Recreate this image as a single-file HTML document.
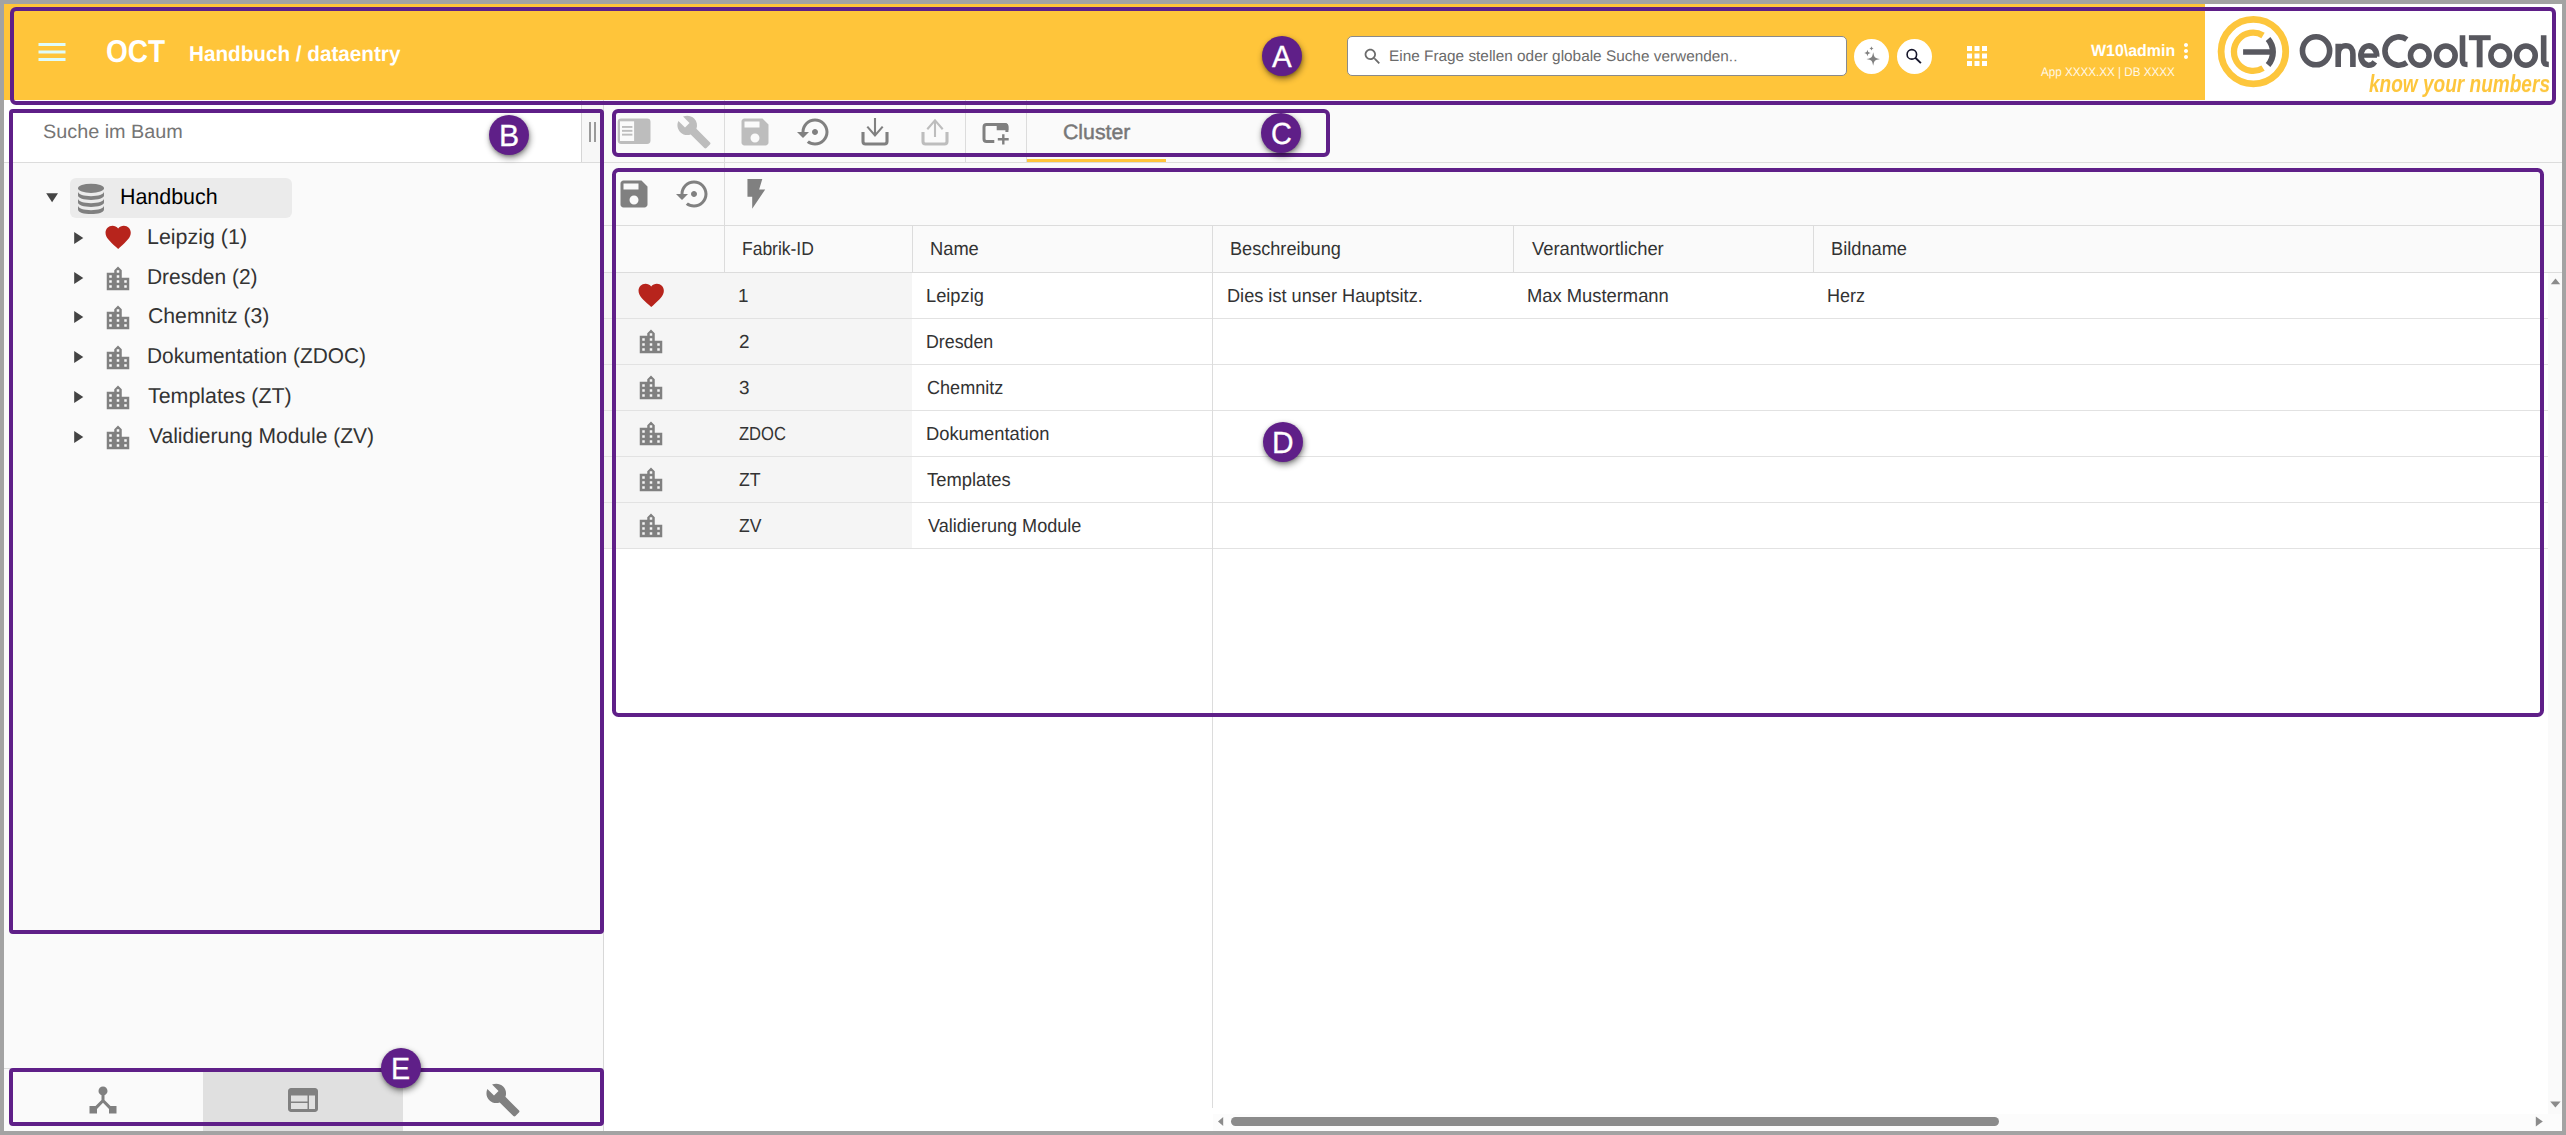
<!DOCTYPE html>
<html lang="de"><head><meta charset="utf-8"><title>OCT - Handbuch / dataentry</title>
<style>
html,body{margin:0;padding:0}
body{width:2566px;height:1135px;position:relative;overflow:hidden;background:#a3a3a3;font-family:"Liberation Sans",sans-serif;}
.r{position:absolute}
.i{position:absolute;display:block;overflow:visible}
.t{position:absolute;white-space:nowrap;transform-origin:0 50%;display:block}
.bx{position:absolute;box-sizing:border-box;border:4px solid #5f1f88}
.bd{position:absolute;width:40px;height:40px;border-radius:50%;background:#5f1f88;box-shadow:1px 3px 6px rgba(0,0,0,.45),0 1px 3px rgba(0,0,0,.2)}
</style></head><body>
<div class="r" style="left:4px;top:4px;width:2558px;height:1127px;background:#ffffff;"></div>
<div class="r" style="left:4px;top:4px;width:2201px;height:96px;background:#ffc53a;"></div>
<div class="r" style="left:4px;top:163px;width:600px;height:905px;background:#fafafa;"></div>
<div class="r" style="left:4px;top:100px;width:577px;height:62px;background:#ffffff;"></div>
<div class="r" style="left:581px;top:100px;width:23px;height:62px;background:#f7f7f7;border-left:1px solid #d6d6d6;box-sizing:border-box;"></div>
<div class="r" style="left:4px;top:162px;width:600px;height:1px;background:#dcdcdc;"></div>
<div class="r" style="left:4px;top:1068px;width:600px;height:63px;background:#fafafa;border-top:1px solid #dcdcdc;box-sizing:border-box;"></div>
<div class="r" style="left:203px;top:1069px;width:200px;height:62px;background:#e0e0e0;"></div>
<div class="r" style="left:603px;top:100px;width:1px;height:1031px;background:#d8d8d8;"></div>
<div class="r" style="left:604px;top:100px;width:1958px;height:125px;background:#fafafa;"></div>
<div class="r" style="left:604px;top:162px;width:1958px;height:1px;background:#dcdcdc;"></div>
<div class="r" style="left:604px;top:225px;width:1958px;height:1px;background:#dcdcdc;"></div>
<div class="r" style="left:604px;top:226px;width:1958px;height:46px;background:#fafafa;"></div>
<div class="r" style="left:604px;top:272px;width:1958px;height:1px;background:#dcdcdc;"></div>
<div class="r" style="left:604px;top:273px;width:308px;height:276px;background:#f5f5f5;"></div>
<div class="r" style="left:604px;top:318px;width:1944px;height:1px;background:#e2e2e2;"></div>
<div class="r" style="left:604px;top:364px;width:1944px;height:1px;background:#e2e2e2;"></div>
<div class="r" style="left:604px;top:410px;width:1944px;height:1px;background:#e2e2e2;"></div>
<div class="r" style="left:604px;top:456px;width:1944px;height:1px;background:#e2e2e2;"></div>
<div class="r" style="left:604px;top:502px;width:1944px;height:1px;background:#e2e2e2;"></div>
<div class="r" style="left:604px;top:548px;width:1944px;height:1px;background:#e2e2e2;"></div>
<div class="r" style="left:724px;top:226px;width:1px;height:46px;background:#dcdcdc;"></div>
<div class="r" style="left:912px;top:226px;width:1px;height:46px;background:#dcdcdc;"></div>
<div class="r" style="left:1513px;top:226px;width:1px;height:46px;background:#dcdcdc;"></div>
<div class="r" style="left:1813px;top:226px;width:1px;height:46px;background:#dcdcdc;"></div>
<div class="r" style="left:724px;top:100px;width:1px;height:126px;background:#dcdcdc;"></div>
<div class="r" style="left:965px;top:100px;width:1px;height:62px;background:#dcdcdc;"></div>
<div class="r" style="left:1026px;top:100px;width:1px;height:62px;background:#dcdcdc;"></div>
<div class="r" style="left:1212px;top:226px;width:1px;height:882px;background:#dcdcdc;"></div>
<div class="r" style="left:1027px;top:159px;width:139px;height:3px;background:#ffc53a;"></div>
<div class="r" style="left:2548px;top:273px;width:14px;height:841px;background:#fafafa;"></div>
<div class="r" style="left:1213px;top:1114px;width:1349px;height:17px;background:#fcfcfc;"></div>
<div class="r" style="left:1231px;top:1117px;width:768px;height:9px;background:#8b8b8b;border-radius:4.5px;"></div>
<svg class="i" style="left:2548px;top:273px" width="14" height="20" viewBox="0 0 14 20"><path fill="#8b8b8b" d="M2.8 11.2 L7.5 5.6 L12.2 11.2z"/></svg>
<svg class="i" style="left:2548px;top:1094px" width="14" height="20" viewBox="0 0 14 20"><path fill="#8b8b8b" d="M2.2 7.6 L12.6 7.6 L7.4 13.5z"/></svg>
<svg class="i" style="left:1213px;top:1114px" width="18" height="17" viewBox="0 0 18 17"><path fill="#8b8b8b" d="M5 7.5 L10.2 3 L10.2 12z"/></svg>
<svg class="i" style="left:2530px;top:1114px" width="18" height="17" viewBox="0 0 18 17"><path fill="#8b8b8b" d="M12.8 7.5 L5.8 2.6 L5.8 12.4z"/></svg>
<svg class="i" style="left:34.00px;top:34.00px" width="36" height="36" viewBox="0 0 24 24" ><path fill="#dffdfb" d="M3 18h18v-2H3v2zm0-5h18v-2H3v2zm0-7v2h18V6H3z"/></svg>
<span class="t" style="left:105.85px;top:30.90px;font-size:31.69px;line-height:41px;color:#fff;font-weight:700;transform:rotate(0.03deg) scaleX(0.8828);">OCT</span>
<span class="t" style="left:189.42px;top:39.90px;font-size:21.51px;line-height:28px;color:#fff;font-weight:700;transform:rotate(0.03deg) scaleX(0.9617);">Handbuch / dataentry</span>
<div class="r" style="left:1347.2px;top:36.2px;width:499.5px;height:39.5px;background:#fff;border:1px solid #8a8a8a;border-radius:5px;box-sizing:border-box;"></div>
<svg class="i" style="left:1361.70px;top:46.30px" width="21" height="21" viewBox="0 0 24 24" ><path fill="#6b6b6b" d="M15.5 14h-.79l-.28-.27C15.41 12.59 16 11.11 16 9.5 16 5.91 13.09 3 9.5 3S3 5.91 3 9.5 5.91 16 9.5 16c1.61 0 3.09-.59 4.23-1.57l.27.28v.79l5 4.99L20.49 19l-4.99-5zm-6 0C7.01 14 5 11.99 5 9.5S7.01 5 9.5 5 14 7.01 14 9.5 11.99 14 9.5 14z"/></svg>
<span class="t" style="left:1388.74px;top:46.20px;font-size:15.26px;line-height:20px;color:#6b6b6b;transform:rotate(0.03deg) scaleX(1.0073);">Eine Frage stellen oder globale Suche verwenden..</span>
<div class="r" style="left:1853.95px;top:38.85px;width:35.1px;height:35.1px;background:#fff;border-radius:50%;"></div>
<div class="r" style="left:1896.95px;top:38.85px;width:35.1px;height:35.1px;background:#fff;border-radius:50%;"></div>
<svg class="i" style="left:1850px;top:34px" width="90" height="45" viewBox="1850 34 90 45"><g fill="#808080"><path d="M1873.2 52.20 C1874.42 57.78 1874.42 57.78 1880.00 59.0 C1874.42 60.22 1874.42 60.22 1873.2 65.80 C1871.98 60.22 1871.98 60.22 1866.40 59.0 C1871.98 57.78 1871.98 57.78 1873.2 52.20z"/><path d="M1867.45 49.65 C1868.18 52.22 1868.18 52.22 1870.75 52.95 C1868.18 53.68 1868.18 53.68 1867.45 56.25 C1866.72 53.68 1866.72 53.68 1864.15 52.95 C1866.72 52.22 1866.72 52.22 1867.45 49.65z"/><path d="M1871.5 46.35 C1872.01 47.89 1872.01 47.89 1873.55 48.4 C1872.01 48.91 1872.01 48.91 1871.5 50.45 C1870.99 48.91 1870.99 48.91 1869.45 48.4 C1870.99 47.89 1870.99 47.89 1871.5 46.35z"/></g><circle cx="1911.85" cy="54.4" r="4.75" fill="none" stroke="#15152a" stroke-width="1.6"/><path d="M1915.3 57.8 L1920.9 63.1" stroke="#15152a" stroke-width="1.9" fill="none"/></svg>
<svg class="i" style="left:1962.00px;top:41.00px" width="30" height="30" viewBox="0 0 24 24" ><path fill="#fff" d="M4 8h4V4H4v4zm6 12h4v-4h-4v4zm-6 0h4v-4H4v4zm0-6h4v-4H4v4zm6 0h4v-4h-4v4zm6-10v4h4V4h-4zm-6 4h4V4h-4v4zm6 6h4v-4h-4v4zm0 6h4v-4h-4v4z"/></svg>
<span class="t" style="left:2090.78px;top:40.00px;font-size:16.42px;line-height:21px;color:#fff;font-weight:700;transform:rotate(0.03deg) scaleX(0.9712);">W10\admin</span>
<span class="t" style="left:2040.68px;top:63.50px;font-size:12.50px;line-height:16px;color:#fff8e6;transform:rotate(0.03deg) scaleX(0.9316);">App XXXX.XX | DB XXXX</span>
<svg class="i" style="left:2174.00px;top:38.95px" width="24" height="24" viewBox="0 0 24 24" ><path fill="#fff" d="M12 8c1.1 0 2-.9 2-2s-.9-2-2-2-2 .9-2 2 .9 2 2 2zm0 2c-1.1 0-2 .9-2 2s.9 2 2 2 2-.9 2-2-.9-2-2-2zm0 6c-1.1 0-2 .9-2 2s.9 2 2 2 2-.9 2-2-.9-2-2-2z"/></svg>
<span class="t" style="left:42.80px;top:118.80px;font-size:19.33px;line-height:25px;color:#757575;transform:rotate(0.03deg) scaleX(1.0253);">Suche im Baum</span>
<div class="r" style="left:589px;top:122px;width:1.6px;height:20px;background:#9a9a9a;"></div>
<div class="r" style="left:594.4px;top:122px;width:1.6px;height:20px;background:#9a9a9a;"></div>
<div class="r" style="left:70px;top:178px;width:222px;height:40px;background:#ebebeb;border-radius:6px;"></div>
<svg class="i" style="left:40px;top:185px" width="24" height="24" viewBox="0 0 24 24"><path fill="#444" d="M6.2 8.2 L18 8.2 L12.1 17.3z"/></svg>
<svg class="i" style="left:76px;top:182px" width="30" height="34" viewBox="0 0 30 34"><g fill="#808080"><ellipse cx="15" cy="6.3" rx="13" ry="4.6"/><path d="M2 9.6 C2 12.6 8 14.2 15 14.2 S28 12.6 28 9.6 V13.6 C28 16.4 22 18 15 18 S2 16.4 2 13.6z"/><path d="M2 16.6 C2 19.6 8 21.2 15 21.2 S28 19.6 28 16.6 V20.6 C28 23.4 22 25 15 25 S2 23.4 2 20.6z"/><path d="M2 23.6 C2 26.6 8 28.2 15 28.2 S28 26.6 28 23.6 V27.4 C28 30.4 22 32 15 32 S2 30.4 2 27.4z"/></g></svg>
<span class="t" style="left:120.14px;top:182.00px;font-size:22.09px;line-height:29px;color:#000;transform:rotate(0.03deg) scaleX(0.9695);">Handbuch</span>
<svg class="i" style="left:66px;top:226.00px" width="24" height="24" viewBox="0 0 24 24"><path fill="#444" d="M8.2 6 L17.3 12 L8.2 18z"/></svg>
<svg class="i" style="left:102.95px;top:221.95px" width="30.3" height="30.3" viewBox="0 0 24 24" ><path fill="#b7241c" d="M12 21.35l-1.45-1.32C5.4 15.36 2 12.28 2 8.5 2 5.42 4.42 3 7.5 3c1.74 0 3.41.81 4.5 2.09C13.09 3.81 14.76 3 16.5 3 19.58 3 22 5.42 22 8.5c0 3.78-3.4 6.86-8.55 11.54L12 21.35z"/></svg>
<span class="t" style="left:147.04px;top:222.90px;font-size:21.51px;line-height:28px;color:#333;transform:rotate(0.03deg) scaleX(0.9965);">Leipzig (1)</span>
<svg class="i" style="left:66px;top:266.00px" width="24" height="24" viewBox="0 0 24 24"><path fill="#444" d="M8.2 6 L17.3 12 L8.2 18z"/></svg>
<svg class="i" style="left:103.00px;top:263.50px" width="30" height="30" viewBox="0 0 24 24" ><path fill="#808080" d="M15 11V5l-3-3-3 3v2H3v14h18V11h-6zm-8 8H5v-2h2v2zm0-4H5v-2h2v2zm0-4H5V9h2v2zm6 8h-2v-2h2v2zm0-4h-2v-2h2v2zm0-4h-2V9h2v2zm0-4h-2V5h2v2zm6 12h-2v-2h2v2zm0-4h-2v-2h2v2z"/></svg>
<span class="t" style="left:147.08px;top:262.90px;font-size:21.51px;line-height:28px;color:#333;transform:rotate(0.03deg) scaleX(0.9739);">Dresden (2)</span>
<svg class="i" style="left:66px;top:305.00px" width="24" height="24" viewBox="0 0 24 24"><path fill="#444" d="M8.2 6 L17.3 12 L8.2 18z"/></svg>
<svg class="i" style="left:103.00px;top:302.50px" width="30" height="30" viewBox="0 0 24 24" ><path fill="#808080" d="M15 11V5l-3-3-3 3v2H3v14h18V11h-6zm-8 8H5v-2h2v2zm0-4H5v-2h2v2zm0-4H5V9h2v2zm6 8h-2v-2h2v2zm0-4h-2v-2h2v2zm0-4h-2V9h2v2zm0-4h-2V5h2v2zm6 12h-2v-2h2v2zm0-4h-2v-2h2v2z"/></svg>
<span class="t" style="left:147.72px;top:301.90px;font-size:21.51px;line-height:28px;color:#333;transform:rotate(0.03deg) scaleX(0.9859);">Chemnitz (3)</span>
<svg class="i" style="left:66px;top:345.00px" width="24" height="24" viewBox="0 0 24 24"><path fill="#444" d="M8.2 6 L17.3 12 L8.2 18z"/></svg>
<svg class="i" style="left:103.00px;top:342.50px" width="30" height="30" viewBox="0 0 24 24" ><path fill="#808080" d="M15 11V5l-3-3-3 3v2H3v14h18V11h-6zm-8 8H5v-2h2v2zm0-4H5v-2h2v2zm0-4H5V9h2v2zm6 8h-2v-2h2v2zm0-4h-2v-2h2v2zm0-4h-2V9h2v2zm0-4h-2V5h2v2zm6 12h-2v-2h2v2zm0-4h-2v-2h2v2z"/></svg>
<span class="t" style="left:147.09px;top:341.90px;font-size:21.51px;line-height:28px;color:#333;transform:rotate(0.03deg) scaleX(0.9693);">Dokumentation (ZDOC)</span>
<svg class="i" style="left:66px;top:385.00px" width="24" height="24" viewBox="0 0 24 24"><path fill="#444" d="M8.2 6 L17.3 12 L8.2 18z"/></svg>
<svg class="i" style="left:103.00px;top:382.50px" width="30" height="30" viewBox="0 0 24 24" ><path fill="#808080" d="M15 11V5l-3-3-3 3v2H3v14h18V11h-6zm-8 8H5v-2h2v2zm0-4H5v-2h2v2zm0-4H5V9h2v2zm6 8h-2v-2h2v2zm0-4h-2v-2h2v2zm0-4h-2V9h2v2zm0-4h-2V5h2v2zm6 12h-2v-2h2v2zm0-4h-2v-2h2v2z"/></svg>
<span class="t" style="left:148.32px;top:381.90px;font-size:21.51px;line-height:28px;color:#333;transform:rotate(0.03deg) scaleX(0.9943);">Templates (ZT)</span>
<svg class="i" style="left:66px;top:425.00px" width="24" height="24" viewBox="0 0 24 24"><path fill="#444" d="M8.2 6 L17.3 12 L8.2 18z"/></svg>
<svg class="i" style="left:103.00px;top:422.50px" width="30" height="30" viewBox="0 0 24 24" ><path fill="#808080" d="M15 11V5l-3-3-3 3v2H3v14h18V11h-6zm-8 8H5v-2h2v2zm0-4H5v-2h2v2zm0-4H5V9h2v2zm6 8h-2v-2h2v2zm0-4h-2v-2h2v2zm0-4h-2V9h2v2zm0-4h-2V5h2v2zm6 12h-2v-2h2v2zm0-4h-2v-2h2v2z"/></svg>
<span class="t" style="left:148.71px;top:421.90px;font-size:21.51px;line-height:28px;color:#333;transform:rotate(0.03deg) scaleX(0.9776);">Validierung Module (ZV)</span>
<svg class="i" style="left:85.00px;top:1082.00px" width="36" height="36" viewBox="0 0 24 24" ><path fill="#808080" d="M17 16l-4-4V8.82C14.16 8.4 15 7.3 15 6c0-1.66-1.34-3-3-3S9 4.34 9 6c0 1.3.84 2.4 2 2.82V12l-4 4H3v5h5v-3.05l4-4.2 4 4.2V21h5v-5h-4z"/></svg>
<svg class="i" style="left:285.00px;top:1082.00px" width="36" height="36" viewBox="0 0 24 24" ><path fill="#808080" d="M20 4H4c-1.1 0-1.99.9-1.99 2L2 18c0 1.1.9 2 2 2h16c1.1 0 2-.9 2-2V6c0-1.1-.9-2-2-2zm-5 14H4v-4h11v4zm0-5H4V9h11v4zm5 5h-4V9h4v9z"/></svg>
<svg class="i" style="left:484.60px;top:1081.60px" width="36" height="36" viewBox="0 0 24 24" ><path fill="#808080" d="M22.7 19l-9.1-9.1c.9-2.3.4-5-1.5-6.9-2-2-5-2.4-7.4-1.3L9 6 6 9 1.6 4.7C.4 7.1.9 10.1 2.9 12.1c1.9 1.9 4.6 2.4 6.9 1.5l9.1 9.1c.4.4 1 .4 1.4 0l2.3-2.3c.5-.4.5-1.1.1-1.4z"/></svg>
<svg class="i" style="left:616px;top:114px" width="36" height="36" viewBox="0 0 36 36"><rect x="1.7" y="4.5" width="32.8" height="25.5" rx="3.4" fill="#bdbdbd"/><rect x="4" y="7.3" width="14.1" height="19.7" fill="#fafafa"/><g fill="#bdbdbd"><rect x="6" y="12" width="10.4" height="1.9"/><rect x="6" y="15.9" width="10.4" height="1.9"/><rect x="6" y="19.7" width="10.4" height="1.9"/></g></svg>
<svg class="i" style="left:676.00px;top:114.00px" width="36" height="36" viewBox="0 0 24 24" ><path fill="#bdbdbd" d="M22.7 19l-9.1-9.1c.9-2.3.4-5-1.5-6.9-2-2-5-2.4-7.4-1.3L9 6 6 9 1.6 4.7C.4 7.1.9 10.1 2.9 12.1c1.9 1.9 4.6 2.4 6.9 1.5l9.1 9.1c.4.4 1 .4 1.4 0l2.3-2.3c.5-.4.5-1.1.1-1.4z"/></svg>
<svg class="i" style="left:737.00px;top:114.00px" width="36" height="36" viewBox="0 0 24 24" ><path fill="#bdbdbd" d="M17 3H5c-1.11 0-2 .9-2 2v14c0 1.1.89 2 2 2h14c1.1 0 2-.9 2-2V7l-4-4zm-5 16c-1.66 0-3-1.34-3-3s1.34-3 3-3 3 1.34 3 3-1.34 3-3 3zm3-10H5V5h10v4z"/></svg>
<svg class="i" style="left:797.00px;top:114.00px" width="36" height="36" viewBox="0 0 24 24" ><path fill="#808080" d="M14 12c0-1.1-.9-2-2-2s-2 .9-2 2 .9 2 2 2 2-.9 2-2zm-2-9c-4.97 0-9 4.03-9 9H0l4 4 4-4H5c0-3.87 3.13-7 7-7s7 3.13 7 7-3.13 7-7 7c-1.51 0-2.91-.49-4.06-1.3l-1.42 1.44C8.04 20.3 9.94 21 12 21c4.97 0 9-4.03 9-9s-4.03-9-9-9z"/></svg>
<svg class="i" style="left:857px;top:114px" width="36" height="36" viewBox="0 0 36 36" fill="none" stroke="#808080"><path d="M6 18 V27.5 Q6 30 8.5 30 H27.5 Q30 30 30 27.5 V18" stroke-width="3.1"/><path d="M18 4 V20.5 M10.3 12.6 L18 21.5 L25.7 12.6" stroke-width="2.1"/></svg>
<svg class="i" style="left:917px;top:114px" width="36" height="36" viewBox="0 0 36 36" fill="none" stroke="#bdbdbd"><path d="M6 18 V27.5 Q6 30 8.5 30 H27.5 Q30 30 30 27.5 V18" stroke-width="3.1"/><path d="M18 23 V7.5 M10.3 15.2 L18 6.3 L25.7 15.2" stroke-width="2.1"/></svg>
<svg class="i" style="left:977px;top:114px" width="36" height="36" viewBox="0 0 36 36"><path d="M17.3 27.5 H9.5 Q7 27.5 7 25 V13 Q7 10.5 9.5 10.5 H27.4 Q29.9 10.5 29.9 13 V17.9" fill="none" stroke="#808080" stroke-width="3"/><path d="M19.7 9 H28 Q31.4 9 31.4 12.5 V16.3 H19.7z" fill="#808080"/><path d="M20.8 25.3 H31.7 M26.3 20.2 V30.4" stroke="#808080" stroke-width="2.4" fill="none"/></svg>
<span class="t" style="left:1062.62px;top:117.75px;font-size:20.78px;line-height:27px;color:#777;transform:rotate(0.03deg) scaleX(1.0243);-webkit-text-stroke:0.45px #777;">Cluster</span>
<svg class="i" style="left:616.00px;top:176.00px" width="36" height="36" viewBox="0 0 24 24" ><path fill="#808080" d="M17 3H5c-1.11 0-2 .9-2 2v14c0 1.1.89 2 2 2h14c1.1 0 2-.9 2-2V7l-4-4zm-5 16c-1.66 0-3-1.34-3-3s1.34-3 3-3 3 1.34 3 3-1.34 3-3 3zm3-10H5V5h10v4z"/></svg>
<svg class="i" style="left:676.00px;top:176.00px" width="36" height="36" viewBox="0 0 24 24" ><path fill="#808080" d="M14 12c0-1.1-.9-2-2-2s-2 .9-2 2 .9 2 2 2 2-.9 2-2zm-2-9c-4.97 0-9 4.03-9 9H0l4 4 4-4H5c0-3.87 3.13-7 7-7s7 3.13 7 7-3.13 7-7 7c-1.51 0-2.91-.49-4.06-1.3l-1.42 1.44C8.04 20.3 9.94 21 12 21c4.97 0 9-4.03 9-9s-4.03-9-9-9z"/></svg>
<svg class="i" style="left:738px;top:176px" width="36" height="36" viewBox="738 176 36 36"><path fill="#808080" d="M747.45 179.1 H762.3 L759.15 189.4 H765.2 L752.2 208.7 V196.8 H747.45z"/></svg>
<span class="t" style="left:742.47px;top:236.10px;font-size:18.90px;line-height:25px;color:#333;transform:rotate(0.03deg) scaleX(0.9251);">Fabrik-ID</span>
<span class="t" style="left:930.10px;top:236.10px;font-size:18.90px;line-height:25px;color:#333;transform:rotate(0.03deg) scaleX(0.9685);">Name</span>
<span class="t" style="left:1229.71px;top:236.10px;font-size:18.90px;line-height:25px;color:#333;transform:rotate(0.03deg) scaleX(0.9594);">Beschreibung</span>
<span class="t" style="left:1531.52px;top:236.10px;font-size:18.90px;line-height:25px;color:#333;transform:rotate(0.03deg) scaleX(0.9727);">Verantwortlicher</span>
<span class="t" style="left:1831.00px;top:236.10px;font-size:18.90px;line-height:25px;color:#333;transform:rotate(0.03deg) scaleX(0.9649);">Bildname</span>
<svg class="i" style="left:635.85px;top:279.80px" width="30.4" height="30.4" viewBox="0 0 24 24" ><path fill="#b7241c" d="M12 21.35l-1.45-1.32C5.4 15.36 2 12.28 2 8.5 2 5.42 4.42 3 7.5 3c1.74 0 3.41.81 4.5 2.09C13.09 3.81 14.76 3 16.5 3 19.58 3 22 5.42 22 8.5c0 3.78-3.4 6.86-8.55 11.54L12 21.35z"/></svg>
<span class="t" style="left:738.46px;top:282.80px;font-size:18.90px;line-height:25px;color:#333;transform:rotate(0.03deg) scaleX(1.0000);">1</span>
<span class="t" style="left:926.10px;top:282.80px;font-size:18.90px;line-height:25px;color:#333;transform:rotate(0.03deg) scaleX(0.9665);">Leipzig</span>
<svg class="i" style="left:636.00px;top:327.20px" width="30" height="30" viewBox="0 0 24 24" ><path fill="#808080" d="M15 11V5l-3-3-3 3v2H3v14h18V11h-6zm-8 8H5v-2h2v2zm0-4H5v-2h2v2zm0-4H5V9h2v2zm6 8h-2v-2h2v2zm0-4h-2v-2h2v2zm0-4h-2V9h2v2zm0-4h-2V5h2v2zm6 12h-2v-2h2v2zm0-4h-2v-2h2v2z"/></svg>
<span class="t" style="left:738.95px;top:328.80px;font-size:18.90px;line-height:25px;color:#333;transform:rotate(0.03deg) scaleX(1.0000);">2</span>
<span class="t" style="left:926.14px;top:328.80px;font-size:18.90px;line-height:25px;color:#333;transform:rotate(0.03deg) scaleX(0.9411);">Dresden</span>
<svg class="i" style="left:636.00px;top:373.20px" width="30" height="30" viewBox="0 0 24 24" ><path fill="#808080" d="M15 11V5l-3-3-3 3v2H3v14h18V11h-6zm-8 8H5v-2h2v2zm0-4H5v-2h2v2zm0-4H5V9h2v2zm6 8h-2v-2h2v2zm0-4h-2v-2h2v2zm0-4h-2V9h2v2zm0-4h-2V5h2v2zm6 12h-2v-2h2v2zm0-4h-2v-2h2v2z"/></svg>
<span class="t" style="left:739.18px;top:374.80px;font-size:18.90px;line-height:25px;color:#333;transform:rotate(0.03deg) scaleX(1.0000);">3</span>
<span class="t" style="left:926.68px;top:374.80px;font-size:18.90px;line-height:25px;color:#333;transform:rotate(0.03deg) scaleX(0.9563);">Chemnitz</span>
<svg class="i" style="left:636.00px;top:419.20px" width="30" height="30" viewBox="0 0 24 24" ><path fill="#808080" d="M15 11V5l-3-3-3 3v2H3v14h18V11h-6zm-8 8H5v-2h2v2zm0-4H5v-2h2v2zm0-4H5V9h2v2zm6 8h-2v-2h2v2zm0-4h-2v-2h2v2zm0-4h-2V9h2v2zm0-4h-2V5h2v2zm6 12h-2v-2h2v2zm0-4h-2v-2h2v2z"/></svg>
<span class="t" style="left:739.37px;top:420.80px;font-size:18.90px;line-height:25px;color:#333;transform:rotate(0.03deg) scaleX(0.8772);">ZDOC</span>
<span class="t" style="left:926.10px;top:420.80px;font-size:18.90px;line-height:25px;color:#333;transform:rotate(0.03deg) scaleX(0.9709);">Dokumentation</span>
<svg class="i" style="left:636.00px;top:465.20px" width="30" height="30" viewBox="0 0 24 24" ><path fill="#808080" d="M15 11V5l-3-3-3 3v2H3v14h18V11h-6zm-8 8H5v-2h2v2zm0-4H5v-2h2v2zm0-4H5V9h2v2zm6 8h-2v-2h2v2zm0-4h-2v-2h2v2zm0-4h-2V9h2v2zm0-4h-2V5h2v2zm6 12h-2v-2h2v2zm0-4h-2v-2h2v2z"/></svg>
<span class="t" style="left:739.34px;top:466.80px;font-size:18.90px;line-height:25px;color:#333;transform:rotate(0.03deg) scaleX(0.9342);">ZT</span>
<span class="t" style="left:927.19px;top:466.80px;font-size:18.90px;line-height:25px;color:#333;transform:rotate(0.03deg) scaleX(0.9728);">Templates</span>
<svg class="i" style="left:636.00px;top:511.20px" width="30" height="30" viewBox="0 0 24 24" ><path fill="#808080" d="M15 11V5l-3-3-3 3v2H3v14h18V11h-6zm-8 8H5v-2h2v2zm0-4H5v-2h2v2zm0-4H5V9h2v2zm6 8h-2v-2h2v2zm0-4h-2v-2h2v2zm0-4h-2V9h2v2zm0-4h-2V5h2v2zm6 12h-2v-2h2v2zm0-4h-2v-2h2v2z"/></svg>
<span class="t" style="left:739.34px;top:512.80px;font-size:18.90px;line-height:25px;color:#333;transform:rotate(0.03deg) scaleX(0.9291);">ZV</span>
<span class="t" style="left:927.52px;top:512.80px;font-size:18.90px;line-height:25px;color:#333;transform:rotate(0.03deg) scaleX(0.9565);">Validierung Module</span>
<span class="t" style="left:1227.11px;top:282.80px;font-size:18.90px;line-height:25px;color:#333;transform:rotate(0.03deg) scaleX(0.9613);">Dies ist unser Hauptsitz.</span>
<span class="t" style="left:1527.09px;top:282.80px;font-size:18.90px;line-height:25px;color:#333;transform:rotate(0.03deg) scaleX(0.9715);">Max Mustermann</span>
<span class="t" style="left:1827.02px;top:282.80px;font-size:18.90px;line-height:25px;color:#333;transform:rotate(0.03deg) scaleX(0.9518);">Herz</span>
<svg class="i" style="left:2205px;top:4px;filter:blur(0.35px)" width="357" height="96" viewBox="2205 4 357 96" fill="none">
<circle cx="2253.4" cy="51.6" r="32.3" stroke="#fdc63c" stroke-width="6.8"/>
<path d="M2263.03 35.51 A19.1 19.1 0 1 0 2263.03 68.09" stroke="#fdc63c" stroke-width="6.3"/>
<path d="M2243.1 52 H2270.5" stroke="#58585f" stroke-width="5.5"/>
<path d="M2268.03 38.88 A19.85 19.85 0 0 1 2268.03 64.92" stroke="#58585f" stroke-width="6.1"/>
<g stroke="#58585f" stroke-width="5.6">
<ellipse cx="2316.05" cy="50.8" rx="13.6" ry="14"/>
<path d="M2338.2 67 V43.7 M2338.2 54.5 C2338.2 49 2341.5 45.8 2345.8 45.8 C2350.3 45.8 2352.9 49 2352.9 54 V67"/>
<path d="M2361 55.6 H2377" stroke-width="4.4"/>
<path d="M2376.65 56.6 A7.9 9.7 0 1 0 2374.8 61.9"/>
<path d="M2406.8 39.45 A13.9 14.15 0 1 0 2406.8 62.65"/>
<ellipse cx="2419.8" cy="55.6" rx="9.3" ry="9.6"/>
<ellipse cx="2445.85" cy="55.6" rx="9.3" ry="9.6"/>
<path d="M2462.5 35.2 V60.3 C2462.5 63.2 2463.8 64.5 2467.5 64.5"/>
<path d="M2468.9 37.7 H2490.7" stroke-width="5"/>
<path d="M2479.65 37.7 V67.3" stroke-width="5.9"/>
<ellipse cx="2500.2" cy="55.6" rx="9.3" ry="9.6"/>
<ellipse cx="2525.95" cy="55.6" rx="9.3" ry="9.6"/>
<path d="M2543.65 35.2 V60.3 C2543.65 63.2 2544.95 64.5 2548.8 64.5"/>
</g>
</svg>
<span class="t" style="left:2297.52px;top:23.30px;font-size:44.00px;line-height:57px;color:transparent;transform:rotate(0.03deg) scaleX(0.9986);">OneCoolTool</span>
<span class="t" style="left:2368.57px;top:68.50px;font-size:23.00px;line-height:30px;color:#fdc63c;font-weight:700;font-style:italic;transform:rotate(0.03deg) scaleX(0.8281);filter:blur(0.3px);">know your numbers</span>
<div class="bx" style="left:10px;top:7px;width:2546px;height:98px;border-radius:6px"></div>
<div class="bx" style="left:9px;top:109px;width:595px;height:825px;border-radius:4px"></div>
<div class="bx" style="left:612px;top:109px;width:718px;height:48px;border-radius:6px"></div>
<div class="bx" style="left:612px;top:168px;width:1932px;height:549px;border-radius:6.5px"></div>
<div class="bx" style="left:9px;top:1068px;width:595px;height:58px;border-radius:4px"></div>
<div class="bd" style="left:1262.1px;top:36px"></div>
<span class="t" style="left:1272.44px;top:36.13px;font-size:30.60px;line-height:40px;color:#fff;transform:rotate(0.03deg) scaleX(0.9660);-webkit-text-stroke:0.3px #fff;">A</span>
<div class="bd" style="left:489px;top:114.9px"></div>
<span class="t" style="left:498.67px;top:115.03px;font-size:30.60px;line-height:40px;color:#fff;transform:rotate(0.03deg) scaleX(0.9886);-webkit-text-stroke:0.3px #fff;">B</span>
<div class="bd" style="left:1261.05px;top:112.75px"></div>
<span class="t" style="left:1270.63px;top:112.88px;font-size:30.60px;line-height:40px;color:#fff;transform:rotate(0.03deg) scaleX(0.9443);-webkit-text-stroke:0.3px #fff;">C</span>
<div class="bd" style="left:1262.95px;top:421.9px"></div>
<span class="t" style="left:1271.85px;top:422.03px;font-size:30.60px;line-height:40px;color:#fff;transform:rotate(0.03deg) scaleX(0.9766);-webkit-text-stroke:0.3px #fff;">D</span>
<div class="bd" style="left:381.1px;top:1047.9px"></div>
<span class="t" style="left:391.20px;top:1048.03px;font-size:30.60px;line-height:40px;color:#fff;transform:rotate(0.03deg) scaleX(0.9346);-webkit-text-stroke:0.3px #fff;">E</span>
</body></html>
